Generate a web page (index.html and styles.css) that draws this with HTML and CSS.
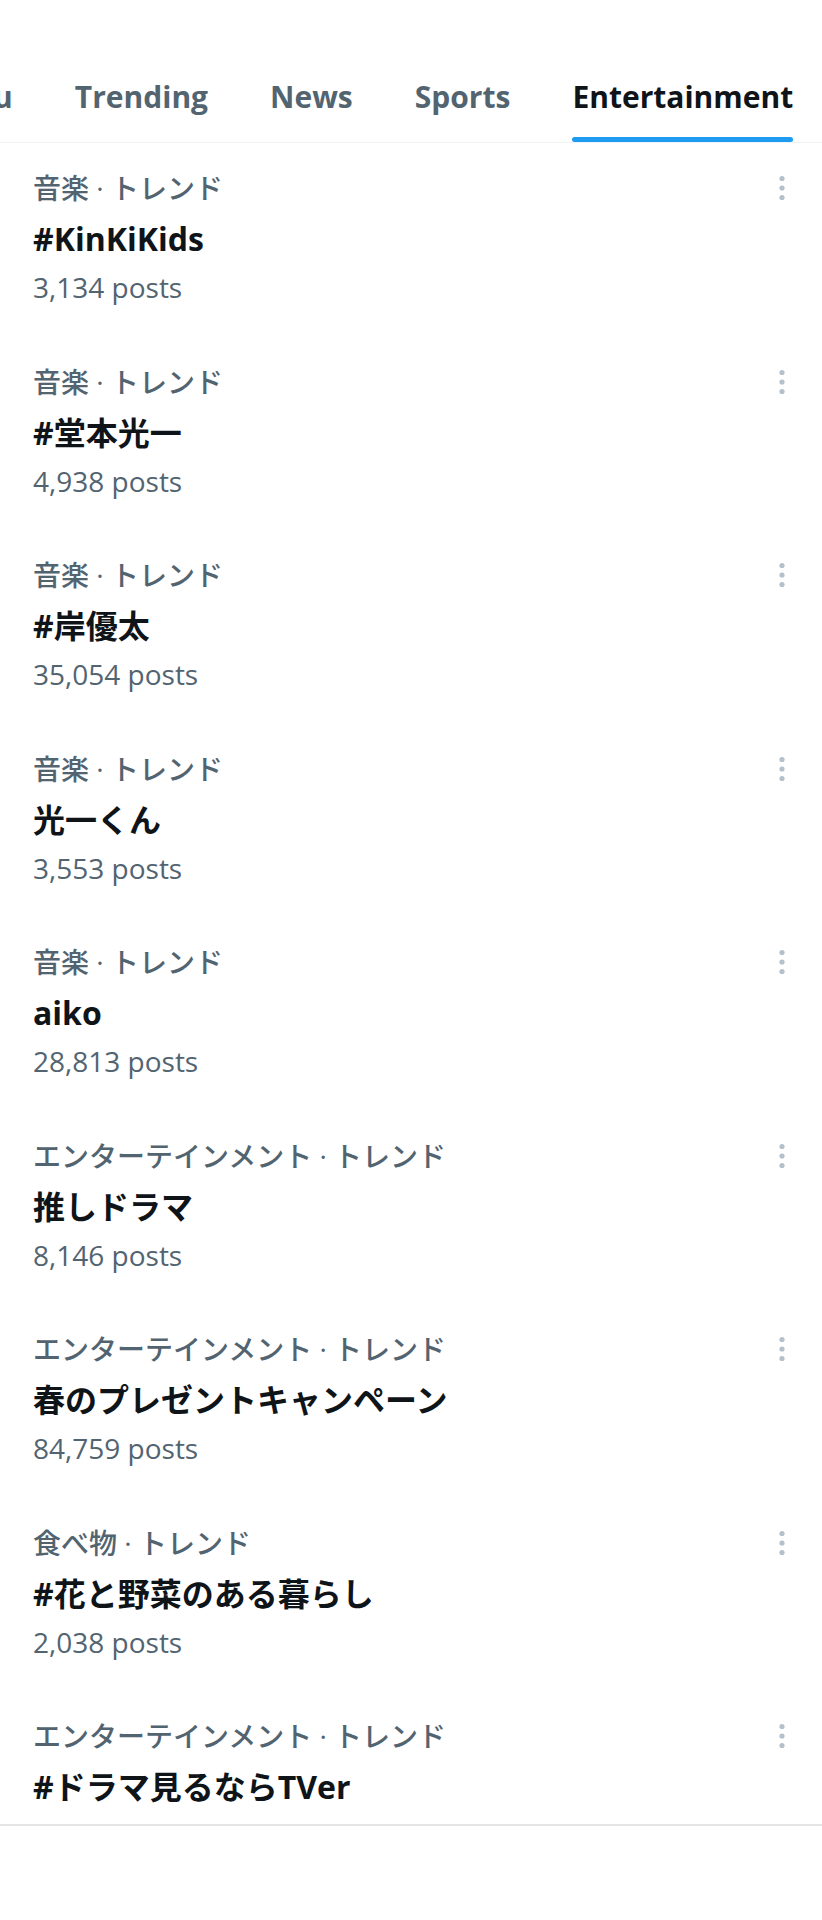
FILE: index.html
```html
<!DOCTYPE html>
<html lang="ja">
<head>
<meta charset="utf-8">
<title>Explore - Entertainment</title>
<link rel="stylesheet" href="styles.css">
</head>
<body>
<div class="page">
  <nav class="tabs">
    <div class="tab-strip">
      <div class="tab"><span class="tab-label">For you</span></div>
      <div class="tab"><span class="tab-label">Trending</span></div>
      <div class="tab"><span class="tab-label">News</span></div>
      <div class="tab"><span class="tab-label">Sports</span></div>
      <div class="tab tab--active"><span class="tab-label">Entertainment<span class="tab-indicator"></span></span></div>
    </div>
  </nav>

  <ul class="trends">
    <li class="trend">
      <div class="trend-head"><span class="trend-cat">音楽 · トレンド</span><svg class="more" viewBox="0 0 14 30"><circle cx="7" cy="5.5" r="2.6"/><circle cx="7" cy="15" r="2.6"/><circle cx="7" cy="24.5" r="2.6"/></svg></div>
      <div class="trend-title">#KinKiKids</div>
      <div class="trend-count">3,134 posts</div>
    </li>
    <li class="trend">
      <div class="trend-head"><span class="trend-cat">音楽 · トレンド</span><svg class="more" viewBox="0 0 14 30"><circle cx="7" cy="5.5" r="2.6"/><circle cx="7" cy="15" r="2.6"/><circle cx="7" cy="24.5" r="2.6"/></svg></div>
      <div class="trend-title">#堂本光一</div>
      <div class="trend-count">4,938 posts</div>
    </li>
    <li class="trend">
      <div class="trend-head"><span class="trend-cat">音楽 · トレンド</span><svg class="more" viewBox="0 0 14 30"><circle cx="7" cy="5.5" r="2.6"/><circle cx="7" cy="15" r="2.6"/><circle cx="7" cy="24.5" r="2.6"/></svg></div>
      <div class="trend-title">#岸優太</div>
      <div class="trend-count">35,054 posts</div>
    </li>
    <li class="trend">
      <div class="trend-head"><span class="trend-cat">音楽 · トレンド</span><svg class="more" viewBox="0 0 14 30"><circle cx="7" cy="5.5" r="2.6"/><circle cx="7" cy="15" r="2.6"/><circle cx="7" cy="24.5" r="2.6"/></svg></div>
      <div class="trend-title">光一くん</div>
      <div class="trend-count">3,553 posts</div>
    </li>
    <li class="trend">
      <div class="trend-head"><span class="trend-cat">音楽 · トレンド</span><svg class="more" viewBox="0 0 14 30"><circle cx="7" cy="5.5" r="2.6"/><circle cx="7" cy="15" r="2.6"/><circle cx="7" cy="24.5" r="2.6"/></svg></div>
      <div class="trend-title">aiko</div>
      <div class="trend-count">28,813 posts</div>
    </li>
    <li class="trend">
      <div class="trend-head"><span class="trend-cat">エンターテインメント · トレンド</span><svg class="more" viewBox="0 0 14 30"><circle cx="7" cy="5.5" r="2.6"/><circle cx="7" cy="15" r="2.6"/><circle cx="7" cy="24.5" r="2.6"/></svg></div>
      <div class="trend-title">推しドラマ</div>
      <div class="trend-count">8,146 posts</div>
    </li>
    <li class="trend">
      <div class="trend-head"><span class="trend-cat">エンターテインメント · トレンド</span><svg class="more" viewBox="0 0 14 30"><circle cx="7" cy="5.5" r="2.6"/><circle cx="7" cy="15" r="2.6"/><circle cx="7" cy="24.5" r="2.6"/></svg></div>
      <div class="trend-title">春のプレゼントキャンペーン</div>
      <div class="trend-count">84,759 posts</div>
    </li>
    <li class="trend">
      <div class="trend-head"><span class="trend-cat">食べ物 · トレンド</span><svg class="more" viewBox="0 0 14 30"><circle cx="7" cy="5.5" r="2.6"/><circle cx="7" cy="15" r="2.6"/><circle cx="7" cy="24.5" r="2.6"/></svg></div>
      <div class="trend-title">#花と野菜のある暮らし</div>
      <div class="trend-count">2,038 posts</div>
    </li>
    <li class="trend trend--last">
      <div class="trend-head"><span class="trend-cat">エンターテインメント · トレンド</span><svg class="more" viewBox="0 0 14 30"><circle cx="7" cy="5.5" r="2.6"/><circle cx="7" cy="15" r="2.6"/><circle cx="7" cy="24.5" r="2.6"/></svg></div>
      <div class="trend-title">#ドラマ見るならTVer</div>
    </li>
  </ul>
</div>
</body>
</html>
```

FILE: styles.css
```css
html, body {
  margin: 0;
  padding: 0;
  background: #ffffff;
}

body {
  font-family: "Open Sans", "Noto Sans CJK JP", sans-serif;
  color: #0f1419;
}

.page {
  width: 822px;
  overflow: hidden;
}

/* Tabs (strip is horizontally scrolled) */
.tabs {
  border-bottom: 1px solid #eff3f4;
  overflow: hidden;
}

.tab-strip {
  display: flex;
  margin-left: -130px;
  width: max-content;
}

.tab {
  display: flex;
  flex-direction: column;
  align-items: center;
  height: 142px;
  padding: 77px 31px 0;
  box-sizing: border-box;
  flex-shrink: 0;
}

.tab-label {
  display: flex;
  flex-direction: column;
  font-size: 30px;
  line-height: 40px;
  font-weight: 700;
  color: #536471;
  white-space: nowrap;
}

.tab--active .tab-label {
  color: #0f1419;
}

.tab-indicator {
  display: block;
  height: 5px;
  margin-top: 20px;
  border-radius: 3px;
  background: #1d9bf0;
}

/* Trends */
.trends {
  list-style: none;
  margin: 0;
  padding: 0;
  border-bottom: 2px solid #e3e5e7;
}

.trend {
  padding: 27px 33px 31.5px;
}

.trend--last {
  padding-bottom: 15px;
}

.trend-head {
  display: flex;
  align-items: center;
  justify-content: space-between;
  height: 36px;
}

.trend-cat {
  font-size: 28px;
  line-height: 36px;
  font-weight: 500;
  color: #536471;
  white-space: nowrap;
}

.more {
  width: 14px;
  height: 30px;
  fill: #b4c0ca;
  flex-shrink: 0;
}

.trend-title {
  margin-top: 11px;
  font-size: 32px;
  line-height: 44px;
  font-weight: 700;
  color: #0f1419;
  white-space: nowrap;
}

.trend-count {
  margin-top: 8px;
  font-size: 28px;
  line-height: 36px;
  color: #536471;
}
```
